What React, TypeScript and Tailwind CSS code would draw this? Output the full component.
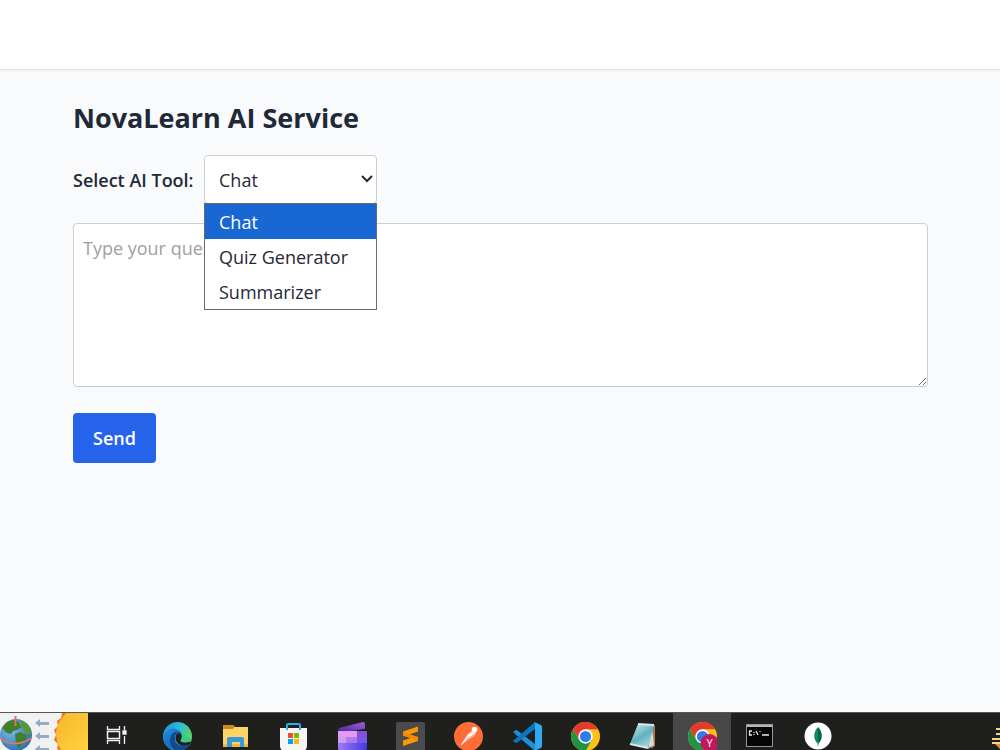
import { useState } from "react";
import type { ReactNode } from "react";

const tools = ["Chat", "Quiz Generator", "Summarizer"];

function Icon({ children }: { children: ReactNode }) {
    return (
        <svg viewBox="0 0 29 29" className="w-[29px] h-[29px] shrink-0" aria-hidden="true">
            {children}
        </svg>
    );
}

function EdgeIcon() {
    return (
        <Icon>
            <defs>
                <linearGradient id="edgeTop" x1="0" y1="0" x2="1" y2="0.5">
                    <stop offset="0" stopColor="#1f8fd8" />
                    <stop offset="0.5" stopColor="#2bb9dc" />
                    <stop offset="1" stopColor="#5fd75a" />
                </linearGradient>
                <linearGradient id="edgeSide" x1="0" y1="0" x2="1" y2="1">
                    <stop offset="0" stopColor="#2190df" />
                    <stop offset="1" stopColor="#0c4f9c" />
                </linearGradient>
            </defs>
            <circle cx="14.5" cy="14.5" r="14.5" fill="url(#edgeTop)" />
            <path d="M0 13C3 7 10 5 15 8C19 10 20 13 18 16C17 11 12 11 11 16C10 22 17 25 24 21C26 20 28 21 26 23C22 29 14 30 8 27C2 24 0 19 0 13Z" fill="url(#edgeSide)" />
            <path d="M8 14C5 20 8 27 15 29C20 29 25 26 27 22C21 26 11 24 12 15C12 12 15 10 17 11C13 8 9 11 8 14Z" fill="#114a8f" />
            <path d="M17.5 18.5C19 17 19.5 14 18 12C23 13 27 16 28.5 17C27 20 23 21 20 20.5C18 20 17 19.5 17.5 18.5Z" fill="#3ccb86" />
            <path d="M12.5 15C13 11 17 10 18.5 13C19.5 15 18 17 17.5 18.5C17 20 20 21.500 28 19.500L27 22C18 26 12 21 12.5 15Z" fill="#1f1f1d" />
        </Icon>
    );
}

function ExplorerIcon() {
    return (
        <Icon>
            <path d="M2 3H12L14 5H27V25H2Z" fill="#e9b03a" />
            <path d="M2 3H12L14 5L12 7H2Z" fill="#d08a10" />
            <path d="M2 7H12L14 5H27V24H2Z" fill="#fdd566" />
            <path d="M2 22H27V25H2Z" fill="#f1b73c" />
            <path d="M6 25V17Q6 15 8 15H21Q23 15 23 17V25H19V20H11V25Z" fill="#3b97de" />
        </Icon>
    );
}

function StoreIcon() {
    return (
        <Icon>
            <path d="M1 6H28V24Q28 29 23 29H6Q1 29 1 24Z" fill="#f5f5f5" />
            <path d="M8 8V3Q8 2 9 2H20Q21 2 21 3V8" fill="none" stroke="#20b0ee" strokeWidth="2" />
            <path d="M9 11H14V16H9Z" fill="#f25022" />
            <path d="M15 11H20V16H15Z" fill="#7fba00" />
            <path d="M9 17H14V22H9Z" fill="#00a4ef" />
            <path d="M15 17H20V22H15Z" fill="#ffb900" />
        </Icon>
    );
}

function ClipchampIcon() {
    return (
        <Icon>
            <defs>
                <linearGradient id="clipArm" x1="0" y1="1" x2="1" y2="0">
                    <stop offset="0" stopColor="#4a2c9c" />
                    <stop offset="1" stopColor="#a45ce0" />
                </linearGradient>
                <linearGradient id="clipBase" x1="0" y1="0" x2="1" y2="0">
                    <stop offset="0" stopColor="#a07cf8" />
                    <stop offset="1" stopColor="#4536e0" />
                </linearGradient>
            </defs>
            <path d="M1 6L25 0Q27 0 27 2V6Q27 7 26 7L14 9H0Z" fill="url(#clipArm)" />
            <path d="M0 9H28Q29 9 29 11V26Q29 29 26 29H3Q0 29 0 26Z" fill="url(#clipBase)" />
            <path d="M0 9H19V15H0Z" fill="#e39df0" />
            <path d="M19 9H28Q29 9 29 11V15H19Z" fill="#8550dc" />
            <path d="M0 15H8V21H0Z" fill="#cf9bf5" />
            <path d="M8 15H19V21H8Z" fill="#ab7cf0" />
            <path d="M19 15H29V21H19Z" fill="#7658ea" />
        </Icon>
    );
}

function SublimeIcon() {
    return (
        <Icon>
            <rect width="29" height="29" rx="2" fill="#4b4b4b" />
            <path d="M7 9.5L22 4.5V9.5L13 12.5L22 15V19L7 24V18.5L15 16L7 13.5Z" fill="#ff9800" />
            <path d="M7 13.5V10L22 15V19Z" fill="#f38900" />
        </Icon>
    );
}

function PostmanIcon() {
    return (
        <Icon>
            <circle cx="14.5" cy="14.5" r="14.5" fill="#ff6c37" />
            <circle cx="20.5" cy="7.500" r="2.8" fill="#fff" />
            <path d="M18 9L22 10L20 14L13 18.5L7 23L10 18L14 12Z" fill="#ffe8df" />
            <path d="M10.5 18.5L19 11M7 23L13 16" stroke="#fff" strokeWidth="1" />
            <path d="M12 18L20 13" stroke="#ff6c37" strokeWidth="0.7" />
        </Icon>
    );
}

function VsCodeIcon() {
    return (
        <Icon>
            <path d="M0 10L3 8Q4 8 5 9L22 22V29L1 11Z" fill="#1a92d8" />
            <path d="M0 19L3 21Q4 21 5 20L22 7V0L1 18Z" fill="#0877bd" />
            <path d="M21 0L28 3Q29 4 29 5V24Q29 25 28 26L21 29Q22 28 22 27V2Q22 1 21 0Z" fill="#31a9f2" />
        </Icon>
    );
}

function ChromeIcon({ badge }: { badge?: string }) {
    return (
        <Icon>
            <circle cx="14.5" cy="14.5" r="14.5" fill="#fbc116" />
            <path d="M1.9 7.3A14.5 14.5 0 0 1 27.1 7.3H14.5L8.2 18Z" fill="#e33b2e" />
            <path d="M1.9 7.3A14.5 14.5 0 0 0 14.5 29L20.8 18.1L8.2 18.1Z" fill="#229342" />
            <circle cx="14.5" cy="14.5" r="7.2" fill="#fff" />
            <circle cx="14.5" cy="14.5" r="5.6" fill="#2f7de9" />
            {badge && (
                <>
                    <circle cx="21.5" cy="21" r="9" fill="#c2185b" />
                    <text x="21.5" y="25" textAnchor="middle" fontSize="11" fill="#fff" fontFamily="Open Sans, sans-serif">
                        {badge}
                    </text>
                </>
            )}
        </Icon>
    );
}

function NotepadIcon() {
    return (
        <Icon>
            <defs>
                <linearGradient id="notePage" x1="0" y1="0" x2="0.6" y2="1">
                    <stop offset="0" stopColor="#d2edf2" />
                    <stop offset="0.6" stopColor="#5fb1bf" />
                    <stop offset="1" stopColor="#a6d6de" />
                </linearGradient>
            </defs>
            <path d="M24 3H26V24L22 27Z" fill="#a17849" />
            <path d="M23 4L25 23L19 27Z" fill="#d4dada" />
            <path d="M9 2L25 3L19 26L1 22Z" fill="url(#notePage)" />
            <path d="M9 2L25 3M1 22L19 26" stroke="#dce6e7" strokeWidth="2" />
        </Icon>
    );
}

function TerminalIcon() {
    return (
        <Icon>
            <rect x="0.5" y="2.5" width="26" height="22" fill="#050505" stroke="#8f979b" />
            <path d="M1 3H26V5H1Z" fill="#b0b9c1" />
            <path d="M6 9H3.5V13H6M8 10V11M8 12V13M10 9L12 13M14 9V10M16 13H23" fill="none" stroke="#e8e8e8" strokeWidth="1.300" />
        </Icon>
    );
}

function MongoIcon() {
    return (
        <Icon>
            <circle cx="14" cy="14" r="13.5" fill="#fff" />
            <path d="M14 5C20.5 12 17.5 19 14 22Z" fill="#00684a" />
            <path d="M14 5C7.5 12 10.5 19 14 22Z" fill="#15875c" />
            <path d="M14 20V24" stroke="#51907a" strokeWidth="1" />
        </Icon>
    );
}

const apps = [
    { name: "Edge", icon: <EdgeIcon /> },
    { name: "File Explorer", icon: <ExplorerIcon /> },
    { name: "Store", icon: <StoreIcon /> },
    { name: "Clipchamp", icon: <ClipchampIcon /> },
    { name: "Sublime Text", icon: <SublimeIcon /> },
    { name: "Postman", icon: <PostmanIcon /> },
    { name: "VS Code", icon: <VsCodeIcon /> },
    { name: "Chrome", icon: <ChromeIcon /> },
    { name: "Notepad", icon: <NotepadIcon /> },
    { name: "Chrome profile", icon: <ChromeIcon badge="Y" />, active: true },
    { name: "Command Prompt", icon: <TerminalIcon /> },
    { name: "MongoDB Compass", icon: <MongoIcon /> },
];

function Taskbar() {
    return (
        <footer className="flex h-[38px] shrink-0 overflow-hidden bg-[#1f1f1d] border-t border-[#55565a]">
            <button type="button" aria-label="Search highlights" className="w-[88px] shrink-0 bg-[#f1f1f1]">
                <svg viewBox="0 0 88 37" className="w-[88px] h-[37px]">
                    <defs>
                        <radialGradient id="globeSea" cx="0.35" cy="0.35" r="0.7">
                            <stop offset="0" stopColor="#7dbdec" />
                            <stop offset="1" stopColor="#2f6fae" />
                        </radialGradient>
                        <linearGradient id="sunFace" x1="0" y1="0" x2="1" y2="1">
                            <stop offset="0" stopColor="#f8b62c" />
                            <stop offset="1" stopColor="#ffd23e" />
                        </linearGradient>
                    </defs>
                    <circle cx="16" cy="22" r="16" fill="url(#globeSea)" />
                    <path d="M2 15L7 9L13 7L18 8L20 12L22 14L17 17L13 18L11 21L7 20L4 17Z" fill="#3d7f2a" />
                    <path d="M20 7L27 11L31 18L30 22L26 20L23 16L21 12Z" fill="#579a2b" />
                    <path d="M15 21L20 19L27 22L26 27L22 30L19 36L16 30Z" fill="#3d7f2a" />
                    <path d="M15.5 3V13" stroke="#ec6d5c" strokeWidth="2" />
                    <path d="M0 25Q14 36 32 25" fill="none" stroke="#e97862" strokeWidth="1.5" />
                    <path d="M35 10L40 6V9H49V12H40V14ZM35 23L40 19V22H49V25H40V27ZM35 36L40 32V35H49V37H35Z" fill="#96abc1" />
                    <path d="M62 0L61 5L57 8L58 13L54 17L56 22L54 27L58 31L57 36L59 37H88V0Z" fill="#e97819" />
                    <path d="M66 0Q49 17 61 37H88V0Z" fill="url(#sunFace)" />
                </svg>
            </button>
            <button type="button" aria-label="Task view" className="flex w-[58px] shrink-0 justify-center pt-3">
                <svg viewBox="0 0 22 20" className="h-5 w-[22px]" fill="none" stroke="#f1f1f1" strokeWidth="1.3">
                    <path d="M1.5 1V4.5H13.5V1M1.5 19V15.5H13.5V19" />
                    <rect x="1.5" y="6.5" width="12" height="7" strokeWidth="1.5" />
                    <path d="M18.5 1V5M18.5 11V19" />
                    <path d="M17 6H20V9H17Z" fill="#f1f1f1" />
                </svg>
            </button>
            <div className="ml-0.5 grid w-[700px] shrink-0 grid-cols-12">
                {apps.map((app) => (
                    <button
                        key={app.name}
                        type="button"
                        aria-label={app.name}
                        className={app.active ? "flex justify-center pt-[9px] bg-[#484848]" : "flex justify-center pt-[9px]"}
                    >
                        {app.icon}
                    </button>
                ))}
            </div>
            <button type="button" aria-label="Notifications" className="ml-auto w-2 shrink-0">
                <svg viewBox="0 0 8 37" className="h-[37px] w-2">
                    <path d="M4 15H8V17H4ZM4 20H8V22H4ZM0 25H8V27H0ZM0 29H8V31H0Z" fill="#f0d58a" />
                    <path d="M3 31H8V36Z" fill="#e88a25" />
                </svg>
            </button>
        </footer>
    );
}

export default function App() {
    const [tool, setTool] = useState("Chat");
    const [open, setOpen] = useState(true);
    const [prompt, setPrompt] = useState("");

    const chooseTool = (name: string) => {
        setTool(name);
        setOpen(false);
    };

    return (
        <div className="flex h-screen flex-col bg-[#f9fafc] font-['Open_Sans','Noto_Sans',sans-serif] text-[18px] text-[#1f2937]">
            <header className="h-[70px] shrink-0 border-b border-[#dfe1e4] bg-white shadow-xs" />

            <main className="min-h-0 flex-1 px-[72px] pt-[31px]">
                <div className="ml-px">
                    <h1 className="mb-5 text-[27px] font-bold leading-[34px]">NovaLearn AI Service</h1>

                    <div className="mb-[19px] flex items-center">
                        <label htmlFor="tool" className="w-[131px] whitespace-nowrap pt-0.5 font-semibold">
                            Select AI Tool:
                        </label>
                        <div className="relative w-[173px]">
                            <select
                                id="tool"
                                value={tool}
                                onChange={(e) => setTool(e.target.value)}
                                className="block h-[49px] w-full appearance-none rounded border border-[#cacdd2] bg-white px-3.5 pt-0.5"
                            >
                                {tools.map((name) => (
                                    <option key={name}>{name}</option>
                                ))}
                            </select>
                            <svg viewBox="0 0 12 8" className="pointer-events-none absolute right-1 top-5 h-2 w-3" fill="none" stroke="#1f2937" strokeWidth="2">
                                <path d="M1 1L6 6L11 1" />
                            </svg>
                            {open && (
                                <ul role="listbox" aria-label="AI tools" className="absolute left-0 top-12 z-10 w-full border border-[#6b6b6b] bg-white">
                                    {tools.map((name) => (
                                        <li
                                            key={name}
                                            role="option"
                                            aria-selected={name === tool}
                                            onClick={() => chooseTool(name)}
                                            className={
                                                name === tool
                                                    ? "h-[35px] px-3.5 leading-[36px] bg-[#1967d2] text-white"
                                                    : "h-[35px] px-3.5 leading-[36px]"
                                            }
                                        >
                                            {name}
                                        </li>
                                    ))}
                                </ul>
                            )}
                        </div>
                    </div>

                    <textarea
                        aria-label="Your question"
                        value={prompt}
                        onChange={(e) => setPrompt(e.target.value)}
                        placeholder="Type your question..."
                        className="mb-[26px] block h-[164px] w-full rounded border border-[#cacdd2] bg-white px-[9px] py-[11px] leading-[26px] placeholder:text-[#a0a0a0]"
                    />

                    <button type="button" className="h-[50px] rounded bg-[#2563eb] px-5 font-semibold text-white">
                        Send
                    </button>
                </div>
            </main>

            <Taskbar />
        </div>
    );
}
